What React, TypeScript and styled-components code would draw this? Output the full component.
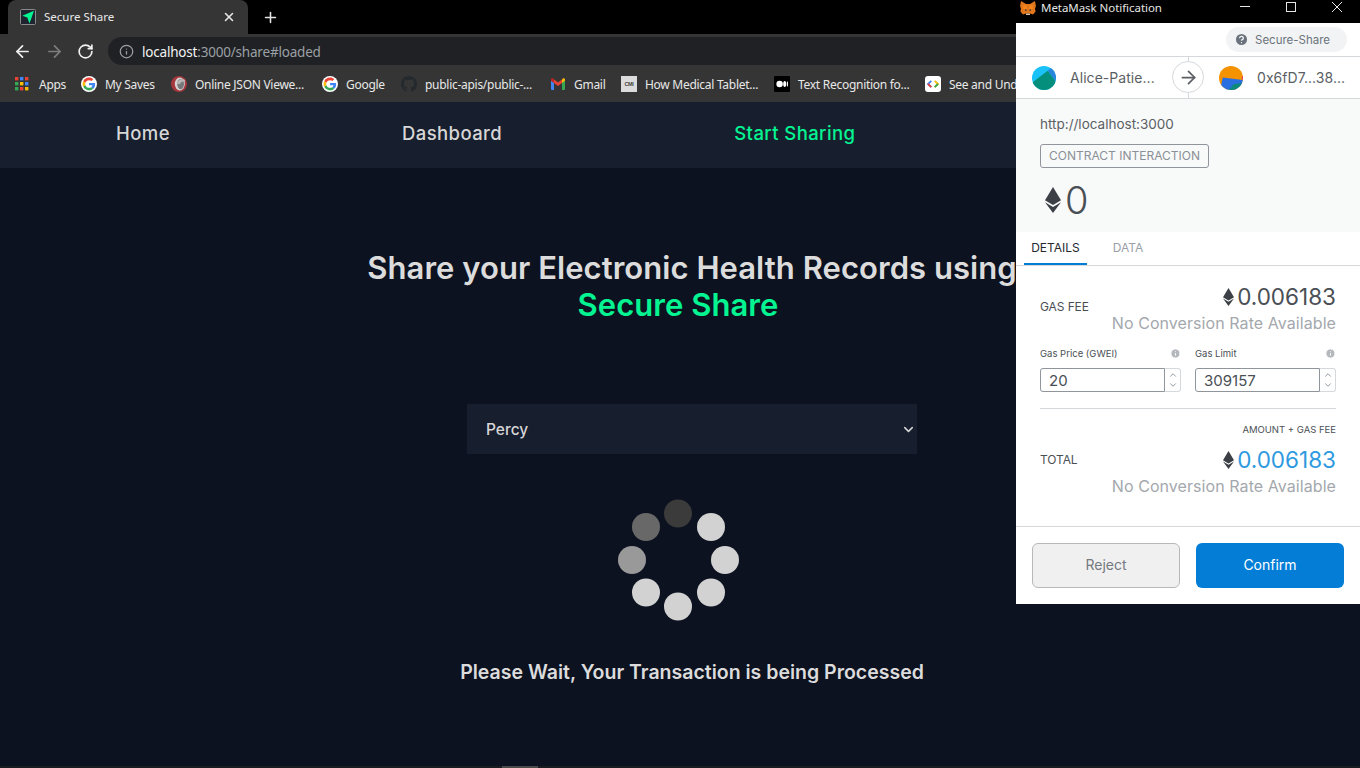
import React from "react";
import styled, { createGlobalStyle } from "styled-components";
import { ArrowLeft, ArrowRight, RotateCw, Plus, X, Info, ChevronDown, ChevronUp, HelpCircle } from "lucide-react";

const Global = createGlobalStyle`
  html, body { margin: 0; padding: 0; background: #0c1220; overflow: hidden; }
  * { box-sizing: border-box; }
`;

const Screen = styled.div`
  position: relative;
  width: 1360px;
  height: 768px;
  overflow: hidden;
  display: flex;
  flex-direction: column;
  background: #0c1220;
`;

const uiFont = `"Noto Sans", "Open Sans", sans-serif`;
const pageFont = `Inter, "Noto Sans", sans-serif`;

const TabStrip = styled.div`
  height: 34px;
  background: #000;
  display: flex;
  align-items: flex-end;
  padding-left: 8px;
  flex-shrink: 0;
`;
const Tab = styled.div`
  width: 240px;
  height: 34px;
  background: #353535;
  border-radius: 8px 8px 0 0;
  display: flex;
  align-items: center;
  padding: 0 12px 1px;
  gap: 8px;
  color: #e8e8e8;
  font: 11.5px ${uiFont};
`;
const TabTitle = styled.span`
  flex: 1;
`;
const NewTab = styled.div`
  width: 44px;
  height: 34px;
  color: #e3e3e3;
  display: flex;
  align-items: center;
  justify-content: center;
`;
const Toolbar = styled.div`
  height: 34px;
  background: #353535;
  display: flex;
  align-items: center;
  padding-left: 13px;
  flex-shrink: 0;
`;
const NavButton = styled.div<{ $dim?: boolean }>`
  width: 32px;
  display: flex;
  color: ${(p) => (p.$dim ? "#7d7d7d" : "#f0f0f0")};
`;
const Omnibox = styled.div`
  flex: 1;
  height: 28px;
  margin-left: -1px;
  background: #202124;
  border-radius: 14px 0 0 14px;
  display: flex;
  align-items: center;
  padding-left: 11px;
  gap: 8px;
  color: #9aa0a6;
  font: 13.5px ${uiFont};
  letter-spacing: -0.2px;
`;
const Address = styled.span`
  padding-top: 2px;
`;
const Host = styled.span`
  color: #f1f3f4;
`;
const Bookmarks = styled.div`
  height: 34px;
  background: #353535;
  display: flex;
  align-items: center;
  padding: 0 0 2px 15px;
  flex-shrink: 0;
  overflow: hidden;
`;
const Bookmark = styled.div<{ $w: number }>`
  flex: 0 0 ${(p) => p.$w}px;
  display: flex;
  align-items: center;
  gap: 8px;
  color: #e8e8e8;
  font: 12px ${uiFont};
  letter-spacing: -0.28px;
  white-space: nowrap;
`;
const BookmarkGlyph = styled.span`
  flex: 0 0 16px;
  width: 16px;
  height: 16px;
  display: flex;
`;
const CmiBox = styled.span`
  width: 16px;
  height: 16px;
  background: #dcdcdc;
  color: #444;
  font: bold 5.5px "Liberation Sans", sans-serif;
  display: flex;
  align-items: center;
  justify-content: center;
`;

const PageNav = styled.nav`
  height: 66px;
  flex-shrink: 0;
  background: #171e2e;
  display: flex;
  align-items: center;
  gap: 232px;
  padding: 0 0 4px 116px;
`;
const NavLink = styled.a<{ $active?: boolean }>`
  color: ${(p) => (p.$active ? "#04f492" : "#d6d6d6")};
  font: 500 18.5px ${pageFont};
  letter-spacing: 0.42px;
`;
const Main = styled.main`
  flex: 1;
  width: 1384px;
  display: flex;
  flex-direction: column;
  align-items: center;
  padding-top: 81px;
  background: #0c1220;
`;
const Heading = styled.h1`
  margin: 0;
  color: #dcdcdc;
  font: 600 31px/37px ${pageFont};
  letter-spacing: 0.05px;
  white-space: nowrap;
`;
const HeadingAccent = styled(Heading)`
  color: #04f492;
  margin-right: 28px;
`;
const SelectBox = styled.div`
  width: 450px;
  height: 50px;
  margin-top: 81px;
  background: #171e2e;
  color: #d6d6d6;
  display: flex;
  align-items: center;
  justify-content: space-between;
  padding: 0 1px 0 19px;
  font: 500 15.5px ${pageFont};
`;
const SpinnerSvg = styled.svg`
  display: block;
  margin: 45px 28px 0 0;
`;
const WaitText = styled.p`
  margin: 39px 0 0;
  color: #dcdcdc;
  font: 600 19.5px/24px ${pageFont};
`;
const BottomBar = styled.div`
  height: 2px;
  flex-shrink: 0;
  background: #1a1d22;
  padding-left: 502px;
`;
const BottomThumb = styled.div`
  width: 36px;
  height: 2px;
  background: #4a4a4a;
`;

/* floating MetaMask window */
const Popup = styled.section`
  position: absolute;
  top: 0;
  left: 1016px;
  width: 344px;
  height: 604px;
  background: #fff;
  display: flex;
  flex-direction: column;
  font-family: ${pageFont};
`;
const TitleBar = styled.div`
  height: 23px;
  flex-shrink: 0;
  background: #000;
  color: #e6e6e6;
  font: 11.5px/16px ${uiFont};
  display: flex;
  align-items: flex-start;
  padding-left: 4px;
`;
const TitleText = styled.span`
  flex: 1;
  margin-left: 5px;
  letter-spacing: -0.05px;
`;
const WinButton = styled.svg`
  display: block;
  margin: 2px 18px 0;
  stroke: #e6e6e6;
  fill: none;
`;
const SiteBar = styled.div`
  height: 34px;
  flex-shrink: 0;
  border-bottom: 1px solid #d6d9dc;
  display: flex;
  justify-content: flex-end;
  align-items: flex-start;
  padding: 4px 13px 0 0;
`;
const SitePill = styled.div`
  width: 121px;
  height: 25px;
  border-radius: 13px;
  background: #f2f3f4;
  color: #6a737d;
  font-size: 11.5px;
  display: flex;
  align-items: center;
  padding-left: 8px;
  gap: 6px;
`;
const Accounts = styled.div`
  position: relative;
  height: 42px;
  border-bottom: 1px solid #d6d9dc;
  display: grid;
  grid-template-columns: 172px 172px;
  flex-shrink: 0;
  &::before {
    content: "";
    position: absolute;
    left: 172px;
    top: 0;
    bottom: 0;
    width: 1px;
    background: #d6d9dc;
  }
`;
const AccountCell = styled.div<{ $pad: number }>`
  display: flex;
  align-items: center;
  gap: 14px;
  padding-left: ${(p) => p.$pad}px;
  color: #5b5f64;
  font-size: 14px;
  letter-spacing: 0.05px;
`;
const ArrowCircle = styled.div`
  position: absolute;
  left: 156px;
  top: 4px;
  width: 32px;
  height: 32px;
  border-radius: 50%;
  background: #fff;
  border: 1px solid #d6d9dc;
  color: #5b5f64;
  display: flex;
  align-items: center;
  justify-content: center;
`;
const Summary = styled.div`
  height: 133px;
  flex-shrink: 0;
  background: #f8f9f9;
  padding: 15px 24px 0;
`;
const Origin = styled.div`
  color: #5b5f64;
  font-size: 13.5px;
  line-height: 20px;
`;
const Badge = styled.div`
  width: 169px;
  height: 24px;
  margin-top: 10px;
  padding-bottom: 2px;
  border: 1px solid #8f959b;
  border-radius: 3px;
  color: #8a9097;
  font-size: 12px;
  display: flex;
  align-items: center;
  justify-content: center;
  white-space: nowrap;
`;
const AmountRow = styled.div`
  display: flex;
  align-items: center;
  gap: 4px;
  margin-top: 10px;
  padding-left: 5px;
  color: #4a4f55;
  font-size: 38px;
  line-height: 44px;
  font-weight: 300;
`;
const Tabs = styled.div`
  height: 34px;
  flex-shrink: 0;
  border-bottom: 1px solid #d6d9dc;
  display: flex;
  padding-left: 8px;
`;
const TabItem = styled.div<{ $active?: boolean }>`
  width: ${(p) => (p.$active ? "63px" : "82px")};
  height: 33px;
  display: flex;
  align-items: center;
  justify-content: center;
  font-size: 12px;
  color: ${(p) => (p.$active ? "#24292e" : "#9aa0a6")};
  border-bottom: 2px solid ${(p) => (p.$active ? "#037dd6" : "transparent")};
`;
const Details = styled.div`
  flex: 1;
  padding: 18px 24px 0;
`;
const FeeRow = styled.div`
  display: flex;
  justify-content: space-between;
  align-items: flex-start;
`;
const FeeLabel = styled.span`
  margin-top: 15px;
  color: #4a4f55;
  font-size: 12px;
  letter-spacing: -0.1px;
`;
const FeeValues = styled.div`
  display: flex;
  flex-direction: column;
  align-items: flex-end;
`;
const FeeAmount = styled.div<{ $blue?: boolean }>`
  display: flex;
  align-items: center;
  gap: 3px;
  font-size: 22.5px;
  line-height: 26px;
  color: ${(p) => (p.$blue ? "#2f9ae0" : "#4a4f55")};
`;
const FeeSub = styled.div`
  color: #a4a8ad;
  font-size: 16px;
  line-height: 20px;
  margin-top: 3px;
  letter-spacing: 0.07px;
  white-space: nowrap;
`;
const GasGrid = styled.div`
  display: grid;
  grid-template-columns: 141px 141px;
  column-gap: 14px;
  margin-top: 13px;
`;
const GasLabelRow = styled.div`
  display: flex;
  justify-content: space-between;
  align-items: center;
  height: 14px;
  color: #4a4f55;
  font-size: 9.5px;
`;
const GasField = styled.div`
  display: flex;
  height: 24px;
  margin-top: 8px;
`;
const GasInput = styled.div`
  flex: 1;
  border: 1px solid #8f959b;
  border-radius: 3px 0 0 3px;
  color: #4a4f55;
  font-size: 15px;
  display: flex;
  align-items: center;
  padding-left: 8px;
`;
const GasStepper = styled.div`
  width: 16px;
  border: 1px solid #d6d9dc;
  border-left: none;
  border-radius: 0 3px 3px 0;
  display: flex;
  flex-direction: column;
  align-items: center;
  justify-content: center;
  color: #7d8288;
`;
const Rule = styled.hr`
  margin: 16px 0 0;
  border: none;
  border-top: 1px solid #d6d9dc;
`;
const AmountHint = styled.div`
  margin-top: 14px;
  text-align: right;
  color: #4a4f55;
  font-size: 9.5px;
  line-height: 14px;
`;
const TotalRow = styled(FeeRow)`
  margin-top: 10px;
`;
const TotalLabel = styled(FeeLabel)`
  margin-top: 5px;
`;
const Footer = styled.div`
  height: 78px;
  flex-shrink: 0;
  border-top: 1px solid #d6d9dc;
  display: grid;
  grid-template-columns: 148px 148px;
  column-gap: 16px;
  padding: 16px 16px 0;
`;
const RejectButton = styled.button`
  height: 45px;
  padding-bottom: 3px;
  background: #f0f0f0;
  border: 1px solid #b8b8b8;
  border-radius: 6px;
  color: #75797e;
  font: 400 14px ${pageFont};
`;
const ConfirmButton = styled.button`
  height: 45px;
  padding-bottom: 3px;
  background: #037dd6;
  border: none;
  border-radius: 6px;
  color: #fff;
  font: 400 14px ${pageFont};
`;

const G = () => (
  <svg width="16" height="16" viewBox="-6 -6 60 60">
    <circle cx="24" cy="24" r="30" fill="#fff" />
    <path fill="#EA4335" d="M24 9.5c3.54 0 6.71 1.22 9.21 3.6l6.85-6.85C35.9 2.38 30.47 0 24 0 14.62 0 6.51 5.38 2.56 13.22l7.98 6.19C12.43 13.72 17.74 9.5 24 9.5z" />
    <path fill="#4285F4" d="M46.98 24.55c0-1.57-.15-3.09-.38-4.55H24v9.02h12.94c-.58 2.96-2.26 5.48-4.78 7.18l7.73 6c4.51-4.18 7.09-10.36 7.09-17.65z" />
    <path fill="#FBBC05" d="M10.53 28.59c-.48-1.45-.76-2.99-.76-4.59s.27-3.14.76-4.59l-7.98-6.19C.92 16.46 0 20.12 0 24c0 3.88.92 7.54 2.56 10.78l7.97-6.19z" />
    <path fill="#34A853" d="M24 48c6.48 0 11.93-2.13 15.89-5.81l-7.73-6c-2.15 1.45-4.92 2.3-8.16 2.3-6.26 0-11.57-4.22-13.47-9.91l-7.98 6.19C6.51 42.62 14.62 48 24 48z" />
  </svg>
);

const AppsIcon = () => {
  const colors = ["#ea4335", "#4285f4", "#ea4335", "#34a853", "#fbbc05", "#4285f4", "#34a853", "#ea4335", "#fbbc05"];
  return (
    <svg width="14" height="16" viewBox="0 0 14 16">
      {colors.map((c, i) => (
        <rect key={i} x={(i % 3) * 5} y={1 + Math.floor(i / 3) * 5} width="3.4" height="3.4" fill={c} />
      ))}
    </svg>
  );
};

const OperaIcon = () => (
  <svg width="16" height="16" viewBox="0 0 16 16">
    <circle cx="8" cy="8" r="8" fill="#a5383d" />
    <ellipse cx="8.8" cy="8" rx="5" ry="6.4" fill="#d9d4d4" />
    <ellipse cx="9.6" cy="8" rx="3.400" ry="5.200" fill="#77787a" />
    <path d="M6 8a5 5 0 0 1 8-4v1.800a3.500 3.500 0 0 0-5 2.200z" fill="#b9b5b5" />
  </svg>
);

const GithubIcon = () => (
  <svg width="16" height="16" viewBox="0 0 16 16">
    <path fill="#24292e" d="M8 0C3.58 0 0 3.58 0 8c0 3.54 2.29 6.53 5.47 7.59.4.07.55-.17.55-.38 0-.19-.01-.82-.01-1.49-2.01.37-2.53-.49-2.69-.94-.09-.23-.48-.94-.82-1.13-.28-.15-.68-.52-.01-.53.63-.01 1.08.58 1.23.82.72 1.21 1.87.87 2.33.66.07-.52.28-.87.51-1.07-1.78-.2-3.64-.89-3.64-3.95 0-.87.31-1.59.82-2.15-.08-.2-.36-1.02.08-2.12 0 0 .67-.21 2.2.82.64-.18 1.32-.27 2-.27s1.36.09 2 .27c1.53-1.04 2.2-.82 2.2-.82.44 1.1.16 1.92.08 2.12.51.56.82 1.27.82 2.15 0 3.07-1.87 3.75-3.65 3.95.29.25.54.73.54 1.48 0 1.07-.01 1.93-.01 2.2 0 .21.15.46.55.38A8.01 8.01 0 0 0 16 8c0-4.42-3.58-8-8-8z" />
  </svg>
);

const GmailIcon = () => (
  <svg width="16" height="16" viewBox="0 0 16 16">
    <path fill="#4285f4" d="M1 14V4.2l3 2.3V14H2a1 1 0 0 1-1-1z" />
    <path fill="#34a853" d="M15 14V4.2l-3 2.3V14h2a1 1 0 0 0 1-1z" />
    <path fill="#ea4335" d="M4 7V3.4L8 6.5l4-3.1V7L8 10z" />
    <path fill="#c5221f" d="M1 3.6C1 2.4 2.4 1.8 3.2 2.6L4 3.4V7L1 4.7z" />
    <path fill="#fbbc05" d="M15 3.6c0-1.2-1.4-1.8-2.2-1L12 3.4V7l3-2.3z" />
  </svg>
);

const MediumIcon = () => (
  <svg width="16" height="16" viewBox="0 0 16 16">
    <rect width="16" height="16" rx="1" fill="#000" />
    <ellipse cx="5.6" cy="8" rx="3.2" ry="3.2" fill="#fff" />
    <ellipse cx="10.7" cy="8" rx="1.5" ry="3" fill="#fff" />
    <ellipse cx="13.4" cy="8" rx="0.6" ry="2.7" fill="#fff" />
  </svg>
);

const CodeIcon = () => (
  <svg width="16" height="16" viewBox="0 0 16 16">
    <rect width="16" height="16" rx="3" fill="#fff" />
    <path d="M6.3 4.8 3 8l3.3 3.2" fill="none" stroke="#4285f4" strokeWidth="1.8" />
    <path d="M3 8l3.3 3.2" fill="none" stroke="#ea4335" strokeWidth="1.8" />
    <path d="M9.7 4.8 13 8l-3.3 3.2" fill="none" stroke="#fbbc05" strokeWidth="1.8" />
    <path d="M13 8l-3.3 3.2" fill="none" stroke="#34a853" strokeWidth="1.8" />
  </svg>
);

const TabFavicon = () => (
  <svg width="16" height="16" viewBox="0 0 16 16">
    <rect x="0.5" y="0.5" width="15" height="15" rx="1" fill="#1d2430" stroke="#8a8a8a" />
    <path d="M14 1.800 2.300 6.800l5 1.700 2.200 6z" fill="#04f492" />
  </svg>
);

const Fox = () => (
  <svg width="16" height="16" viewBox="0 0 16 16">
    <path fill="#e2761b" d="M1 1l5 3h4l5-3 .9 5L15 9l.6 2.5-2.6 3-3-1H6l-3 1-2.6-3L1 9 .1 6z" />
    <path fill="#f6851b" d="M3 6l3-1 1 4H3.500zM13 6l-3-1-1 4h3.500z" />
    <path fill="#233447" d="M5 9.500h1.600v1.200H5zM9.400 9.500H11v1.200H9.400z" />
    <path fill="#d7c1b3" d="M6 13.500h4v1.500H6z" />
  </svg>
);

const Eth = ({ w, h }: { w: number; h: number }) => (
  <svg width={w} height={h} viewBox="0 0 16 26">
    <path fill="#3c4046" d="M8 0 0 13.200 8 18l8-4.800z" />
    <path fill="#3c4046" d="M0 15.200 8 26l8-10.800L8 20z" />
  </svg>
);

const AliceAvatar = () => (
  <svg width="24" height="24" viewBox="0 0 24 24">
    <defs>
      <clipPath id="alice-clip"><circle cx="12" cy="12" r="12" /></clipPath>
    </defs>
    <g clipPath="url(#alice-clip)">
      <rect width="24" height="24" fill="#1bc2f7" />
      <path d="M15.700 4.700 20 1 26 8v10z" fill="#2a86dc" />
      <path d="M-1 17.500 15.700 4.700 25 17.500V25H-1z" fill="#048f7c" />
    </g>
  </svg>
);

const TargetAvatar = () => (
  <svg width="24" height="24" viewBox="0 0 24 24">
    <defs>
      <clipPath id="target-clip"><circle cx="12" cy="12" r="12" /></clipPath>
    </defs>
    <g clipPath="url(#target-clip)">
      <rect width="24" height="24" fill="#f59200" />
      <path d="M3.700 11.500 24 14v11H1z" fill="#2a6fe0" />
      <path d="M9 25l6-7 10-1v8z" fill="#0c8a7a" />
      <path d="M23 10.500h2v3h-2z" fill="#e8305a" />
    </g>
  </svg>
);

const Spinner = () => {
  const dots = [
    { x: 60, y: 14.5, c: "#3b3b3b" },
    { x: 93, y: 28, c: "#d2d2d2" },
    { x: 107, y: 61, c: "#d2d2d2" },
    { x: 93, y: 93.5, c: "#d2d2d2" },
    { x: 60, y: 107.5, c: "#d2d2d2" },
    { x: 28, y: 93.5, c: "#d2d2d2" },
    { x: 14, y: 61, c: "#999999" },
    { x: 28, y: 28, c: "#686868" },
  ];
  return (
    <SpinnerSvg width="121" height="122" viewBox="0 0 121 122">
      {dots.map((d, i) => (
        <circle key={i} cx={d.x} cy={d.y} r="14" fill={d.c} />
      ))}
    </SpinnerSvg>
  );
};

const marks: { w: number; label: string; icon: React.ReactNode }[] = [
  { w: 66, label: "Apps", icon: <AppsIcon /> },
  { w: 90, label: "My Saves", icon: <G /> },
  { w: 151, label: "Online JSON Viewe...", icon: <OperaIcon /> },
  { w: 79, label: "Google", icon: <G /> },
  { w: 149, label: "public-apis/public-...", icon: <GithubIcon /> },
  { w: 71, label: "Gmail", icon: <GmailIcon /> },
  { w: 153, label: "How Medical Tablet...", icon: <CmiBox>CMI</CmiBox> },
  { w: 151, label: "Text Recognition fo...", icon: <MediumIcon /> },
  { w: 200, label: "See and Understand", icon: <CodeIcon /> },
];

export default function App() {
  return (
    <Screen>
      <Global />
      <TabStrip>
        <Tab>
          <TabFavicon />
          <TabTitle>Secure Share</TabTitle>
          <X size={14} strokeWidth={2.6} />
        </Tab>
        <NewTab>
          <Plus size={17} strokeWidth={2.2} />
        </NewTab>
      </TabStrip>
      <Toolbar>
        <NavButton><ArrowLeft size={19} strokeWidth={2.2} /></NavButton>
        <NavButton $dim><ArrowRight size={19} strokeWidth={2.2} /></NavButton>
        <NavButton><RotateCw size={17} strokeWidth={2.4} /></NavButton>
        <Omnibox>
          <Info size={15} />
          <Address><Host>localhost</Host>:3000/share#loaded</Address>
        </Omnibox>
      </Toolbar>
      <Bookmarks>
        {marks.map((m) => (
          <Bookmark key={m.label} $w={m.w}>
            <BookmarkGlyph>{m.icon}</BookmarkGlyph>
            {m.label}
          </Bookmark>
        ))}
      </Bookmarks>
      <PageNav>
        <NavLink>Home</NavLink>
        <NavLink>Dashboard</NavLink>
        <NavLink $active>Start Sharing</NavLink>
      </PageNav>
      <Main>
        <Heading>Share your Electronic Health Records using</Heading>
        <HeadingAccent as="div">Secure Share</HeadingAccent>
        <SelectBox>
          Percy
          <ChevronDown size={15} strokeWidth={2.4} />
        </SelectBox>
        <Spinner />
        <WaitText>Please Wait, Your Transaction is being Processed</WaitText>
      </Main>
      <BottomBar><BottomThumb /></BottomBar>

      <Popup>
        <TitleBar>
          <Fox />
          <TitleText>MetaMask Notification</TitleText>
          <WinButton width="10" height="10" viewBox="0 0 10 10"><path d="M0 4.500h10" /></WinButton>
          <WinButton width="10" height="10" viewBox="0 0 10 10"><rect x="0.5" y="0.5" width="9" height="9" /></WinButton>
          <WinButton width="10" height="10" viewBox="0 0 10 10"><path d="M0 0l10 10M10 0 0 10" /></WinButton>
        </TitleBar>
        <SiteBar>
          <SitePill>
            <HelpCircle size={15} fill="#6a737d" color="#f2f3f4" strokeWidth={2.2} />
            Secure-Share
          </SitePill>
        </SiteBar>
        <Accounts>
          <AccountCell $pad={16}><AliceAvatar />Alice-Patie...</AccountCell>
          <AccountCell $pad={31}><TargetAvatar />0x6fD7...38...</AccountCell>
          <ArrowCircle><ArrowRight size={21} strokeWidth={2} /></ArrowCircle>
        </Accounts>
        <Summary>
          <Origin>http://localhost:3000</Origin>
          <Badge>CONTRACT INTERACTION</Badge>
          <AmountRow><Eth w={16} h={26} />0</AmountRow>
        </Summary>
        <Tabs>
          <TabItem $active>DETAILS</TabItem>
          <TabItem>DATA</TabItem>
        </Tabs>
        <Details>
          <FeeRow>
            <FeeLabel>GAS FEE</FeeLabel>
            <FeeValues>
              <FeeAmount><Eth w={11} h={18} />0.006183</FeeAmount>
              <FeeSub>No Conversion Rate Available</FeeSub>
            </FeeValues>
          </FeeRow>
          <GasGrid>
            <div>
              <GasLabelRow>Gas Price (GWEI)<Info size={11} fill="#b4b7bb" color="#fff" /></GasLabelRow>
              <GasField>
                <GasInput>20</GasInput>
                <GasStepper><ChevronUp size={10} /><ChevronDown size={10} /></GasStepper>
              </GasField>
            </div>
            <div>
              <GasLabelRow>Gas Limit<Info size={11} fill="#b4b7bb" color="#fff" /></GasLabelRow>
              <GasField>
                <GasInput>309157</GasInput>
                <GasStepper><ChevronUp size={10} /><ChevronDown size={10} /></GasStepper>
              </GasField>
            </div>
          </GasGrid>
          <Rule />
          <AmountHint>AMOUNT + GAS FEE</AmountHint>
          <TotalRow>
            <TotalLabel>TOTAL</TotalLabel>
            <FeeValues>
              <FeeAmount $blue><Eth w={11} h={18} />0.006183</FeeAmount>
              <FeeSub>No Conversion Rate Available</FeeSub>
            </FeeValues>
          </TotalRow>
        </Details>
        <Footer>
          <RejectButton>Reject</RejectButton>
          <ConfirmButton>Confirm</ConfirmButton>
        </Footer>
      </Popup>
    </Screen>
  );
}
